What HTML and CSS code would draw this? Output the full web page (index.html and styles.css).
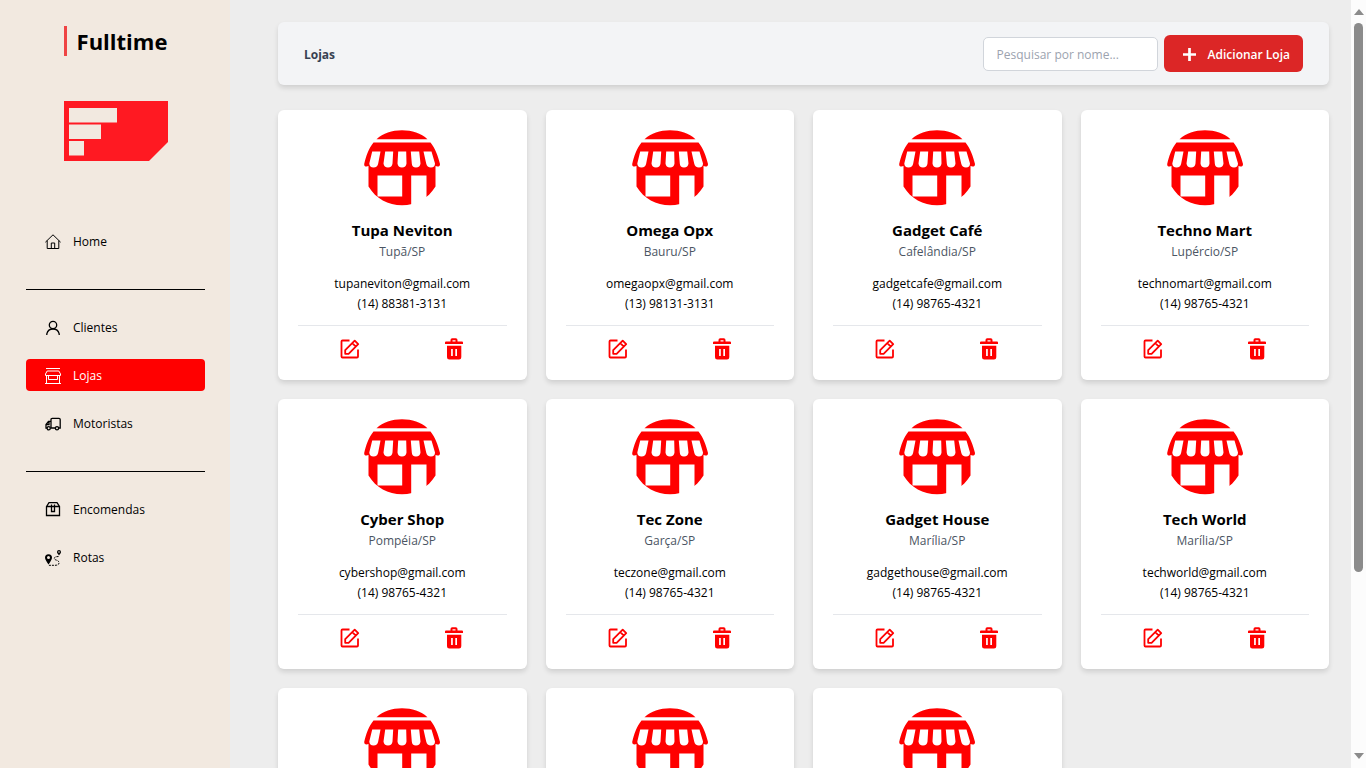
FILE: index.html
```html
<!DOCTYPE html>
<html lang="pt-BR">
<head>
<meta charset="utf-8">
<title>Fulltime - Lojas</title>
<link rel="stylesheet" href="styles.css">
</head>
<body>
<svg class="sprite" aria-hidden="true">
  <symbol id="store" viewBox="0 0 76 76">
    <path fill="#f00" d="M12.5 9.3C19 3.2 28 .3 38 .3S57 3.2 63.5 9.3Z"/>
    <path fill="#f00" d="M9.5 12.6H66.5C71 18 74 26 76 34Q76 36.6 73.5 36.6L71.5 36V56.6C64 69 52 75.3 38 75.3S12 69 4.5 56.6V36L2.500 36.600Q0 36.600 .2 34C2 26 5 18 9.500 12.600Z"/>
    <path fill="#fff" d="M8.200 21.600H16.500L14.200 33.500Q13.500 37.600 9.500 37.600T5.300 33.500ZM21.200 21.600H29.200L28.500 33.500Q28 37.600 24 37.600T19.500 33.500ZM34.200 21.600H42.200L42.500 33.500Q42 37.600 38 37.600T33.500 33.500ZM46.800 21.600H55.200L56.500 33.500Q56 37.600 52 37.600T47.800 33.500ZM59.500 21.600H67.500L71 33.500Q71 37.600 67 37.600T62.200 33.500ZM13.500 45.600H38.200V66.600H13.500ZM47.200 45.600H62.500V76H47.200Z"/>
  </symbol>
  <symbol id="edit" viewBox="0 0 20 20">
    <g fill="none" stroke="#f00" stroke-width="1.8" stroke-linejoin="round"><path d="M9.500 1.500H2.500Q1.500 1.500 1.500 2.500V17.500Q1.500 18.500 2.500 18.500H17Q18 18.500 18 17.500V10.500"/><path d="M5.200 14.800V11.200L14.700 1.700L18.200 5.200L8.600 14.800ZM12.300 4.100L15.800 7.600"/></g>
  </symbol>
  <symbol id="trash" viewBox="0 0 20 22">
    <path fill="#f00" fill-rule="evenodd" d="M6.500 3.500V2Q6.500 .3 8.200 .3H11.800Q13.500 .3 13.500 2V3.500H18Q19 3.500 19 4.400V6.100H1V4.400Q1 3.500 2 3.500ZM8.500 3.500H11.500V2.200H8.500ZM3 7.700H17.300V19.200Q17.300 21.500 15 21.500H5.300Q3 21.500 3 19.200ZM7.100 11V18H8.800V11ZM11.300 11V18H13V11Z"/>
  </symbol>
</svg>
<div class="app">
  <aside class="sidebar">
    <h1 class="brand">Fulltime</h1>
    <svg class="logo" viewBox="0 0 104 60" role="img" aria-label="Fulltime"><path fill="#ff1922" fill-rule="evenodd" d="M0 0H104V41L85 60H0ZM5 7V21.500H53V7ZM5 23.500V38H37V23.500ZM5 40V54.500H20V40Z"/></svg>
    <nav class="nav">
      <a class="nav-link" href="#home"><svg viewBox="0 0 16 16"><path d="M.4 8.200L8 .8L15.600 8.200M2.200 6.600V14.500H13.800V6.600M6.300 14.500V9H9.700V14.500"/></svg>Home</a>
      <hr class="nav-line">
      <a class="nav-link" href="#clientes"><svg class="bold" viewBox="0 0 16 16"><circle cx="8" cy="5" r="3.700"/><path d="M1.800 15V13.800Q3 9 8 9T14.200 13.800V15"/></svg>Clientes</a>
      <a class="nav-link active" href="#lojas" aria-current="page"><svg viewBox="0 0 16 16"><path d="M1 .5H15M0 15.500H16M2.200 3H13.800L15.500 6V7.500H.5V6ZM1.500 7.500V15M14.500 7.500V15M3.500 7.500V11.500H12.500V7.500"/></svg>Lojas</a>
      <a class="nav-link" href="#motoristas"><svg class="bold" viewBox="0 0 16 16"><path d="M6 12V3.500Q6 2.300 7.200 2.300H14Q15.200 2.300 15.200 3.500V12H13.500M10.300 12H5.500M6 5.400H3.500L1 8.500V12H2M1 8.500H4V5.500"/><circle cx="3.700" cy="12.300" r="1.600"/><circle cx="12" cy="12.300" r="1.600"/></svg>Motoristas</a>
      <hr class="nav-line">
      <a class="nav-link" href="#encomendas"><svg class="bold" viewBox="0 0 16 16"><path d="M1.500 4.500L4 .7H12L14.500 4.500V13.500H1.500ZM1.500 4.500H14.500M6.500 2.500V9.500H9.500V2.500"/></svg>Encomendas</a>
      <a class="nav-link" href="#rotas"><svg viewBox="0 0 16 16"><path fill="currentColor" stroke="none" fill-rule="evenodd" d="M3.500 14.500C1.500 11.300 0 9.500 0 7.700A3.500 3.500 0 0 1 7 7.700C7 9.500 5.500 11.300 3.500 14.500ZM3.500 6.100A1.500 1.500 0 1 0 3.500 9.100A1.500 1.500 0 1 0 3.500 6.100ZM14 5.500C12.700 3.700 12 2.900 12 2A2 2 0 0 1 16 2C16 2.900 15.300 3.700 14 5.500ZM14 1.200A.8 .8 0 1 0 14 2.800A.8 .8 0 1 0 14 1.200Z"/><path stroke-dasharray="2 1" d="M13.500 6.500C9 6.500 8 8.800 11 10C15 10.800 15.500 15.300 10 15.300H3.500"/></svg>Rotas</a>
    </nav>
  </aside>
  <main class="content">
    <header class="toolbar">
      <h2 class="toolbar-title">Lojas</h2>
      <div class="toolbar-actions">
        <input class="search" type="text" placeholder="Pesquisar por nome..." aria-label="Pesquisar por nome">
        <button class="add" type="button"><svg viewBox="0 0 12 12"><path d="M6 0V12M0 6H12" stroke="#fff" stroke-width="2.500"/></svg>Adicionar Loja</button>
      </div>
    </header>
    <section class="grid" id="grid"></section>
  </main>
  <div class="scroll" aria-hidden="true">
    <svg viewBox="0 0 10 6"><path d="M5 0L10 6H0Z"/></svg>
    <div class="scroll-track"><div class="scroll-thumb"></div></div>
    <svg viewBox="0 0 10 6"><path d="M0 0H10L5 6Z"/></svg>
  </div>
</div>
<script src="app.js"></script>
</body>
</html>
```
FILE: styles.css
```css
* { box-sizing: border-box; }
body {
  margin: 0;
  background: #ededed;
  color: #000;
  font: 13px/20px "Open Sans", "Noto Sans", sans-serif;
}
h1, h2, h3, p { margin: 0; }
.sprite { display: none; }
.app { display: flex; height: 100vh; overflow: hidden; }

.sidebar {
  flex: 0 0 230px;
  padding: 26px 25px 0 26px;
  background: #f2e9e0;
}
.brand {
  width: max-content;
  margin: 0 auto;
  padding-left: 10px;
  border-left: 3px solid #ef4444;
  font-size: 22px;
  line-height: 30px;
  font-weight: 700;
}
.logo { display: block; width: 104px; height: 60px; margin: 45px auto 64px; }
.nav { display: flex; flex-direction: column; gap: 16px; }
.nav-link {
  display: flex;
  align-items: center;
  gap: 12px;
  height: 32px;
  padding: 2px 19px 0;
  border-radius: 4px;
  color: #000;
  font-size: 12px;
  text-decoration: none;
}
.nav-link svg {
  width: 16px;
  height: 16px;
  fill: none;
  stroke: currentColor;
  stroke-width: 1;
}
.nav-link svg.bold { stroke-width: 1.3; }
.nav-link.active { background: #f00; color: #fff; }
.nav-line {
  width: 100%;
  height: 22px;
  margin: 0;
  padding-top: 16px;
  border: 0;
}
.nav-line::before { content: ""; display: block; height: 1px; background: #000; }

.content {
  flex: 1;
  min-width: 0;
  padding: 22px 22px 22px 48px;
  overflow-y: auto;
  scrollbar-width: none;
}
.toolbar {
  display: flex;
  align-items: center;
  justify-content: space-between;
  padding: 13px 26px;
  border-radius: 6px;
  background: #f3f4f6;
  box-shadow: 0 3px 5px rgba(0, 0, 0, .12);
}
.toolbar-title { padding-top: 2px; color: #374151; font-size: 12px; font-weight: 700; }
.toolbar-actions { display: flex; align-items: center; gap: 6px; }
.search {
  width: 175px;
  height: 34px;
  padding: 1px 13px 0;
  border: 1px solid #d1d5db;
  border-radius: 5px;
  background: #fff;
  font: inherit;
  font-size: 12px;
}
.search::placeholder { color: #9ca3af; }
.add {
  display: flex;
  align-items: center;
  gap: 12px;
  height: 37px;
  padding: 2px 13px 0 19px;
  border: 0;
  border-radius: 6px;
  background: #dc2626;
  color: #fff;
  font: inherit;
  font-size: 12px;
  font-weight: 600;
}
.add svg { width: 13px; height: 13px; }

.grid {
  display: grid;
  grid-template-columns: repeat(4, 1fr);
  gap: 19px;
  margin-top: 25px;
}
.card {
  padding: 20px 20px 16px;
  border-radius: 6px;
  background: #fff;
  box-shadow: 0 3px 5px rgba(0, 0, 0, .12);
  font-size: 12px;
  text-align: center;
}
.store { display: block; width: 76px; height: 76px; margin: 0 auto; }
.card-name { margin-top: 12px; font-size: 15px; line-height: 24px; font-weight: 700; }
.card-place { color: #4b5563; }
.card-mail { margin-top: 12px; }
.card-actions {
  display: flex;
  justify-content: space-around;
  margin-top: 11px;
  padding-top: 8px;
  border-top: 1px solid #e5e7eb;
}
.icon-button { display: flex; padding: 4px; border: 0; background: none; }
.icon-button svg { width: 20px; height: 22px; }

.scroll {
  flex: 0 0 15px;
  display: flex;
  flex-direction: column;
  align-items: center;
  gap: 8px;
  padding: 9px 0;
  background: #fcfcfc;
}
.scroll svg { width: 10px; height: 6px; fill: #8b8b8b; }
.scroll-track { flex: 1; }
.scroll-thumb { width: 9px; height: 76%; border-radius: 5px; background: #8b8b8b; }
```
FILE: app.js
```js
const stores = [
  ["Tupa Neviton", "Tupã/SP", "tupaneviton@gmail.com", "(14) 88381-3131"],
  ["Omega Opx", "Bauru/SP", "omegaopx@gmail.com", "(13) 98131-3131"],
  ["Gadget Café", "Cafelândia/SP", "gadgetcafe@gmail.com", "(14) 98765-4321"],
  ["Techno Mart", "Lupércio/SP", "technomart@gmail.com", "(14) 98765-4321"],
  ["Cyber Shop", "Pompéia/SP", "cybershop@gmail.com", "(14) 98765-4321"],
  ["Tec Zone", "Garça/SP", "teczone@gmail.com", "(14) 98765-4321"],
  ["Gadget House", "Marília/SP", "gadgethouse@gmail.com", "(14) 98765-4321"],
  ["Tech World", "Marília/SP", "techworld@gmail.com", "(14) 98765-4321"],
  ["", "", "", ""],
  ["", "", "", ""],
  ["", "", "", ""]
];

document.getElementById("grid").innerHTML = stores.map(([name, place, mail, phone]) => `
  <article class="card">
    <svg class="store"><use href="#store"/></svg>
    <h3 class="card-name">${name}</h3>
    <p class="card-place">${place}</p>
    <p class="card-mail">${mail}</p>
    <p class="card-phone">${phone}</p>
    <div class="card-actions">
      <button class="icon-button" type="button" aria-label="Editar"><svg><use href="#edit"/></svg></button>
      <button class="icon-button" type="button" aria-label="Excluir"><svg><use href="#trash"/></svg></button>
    </div>
  </article>`).join("");
```
